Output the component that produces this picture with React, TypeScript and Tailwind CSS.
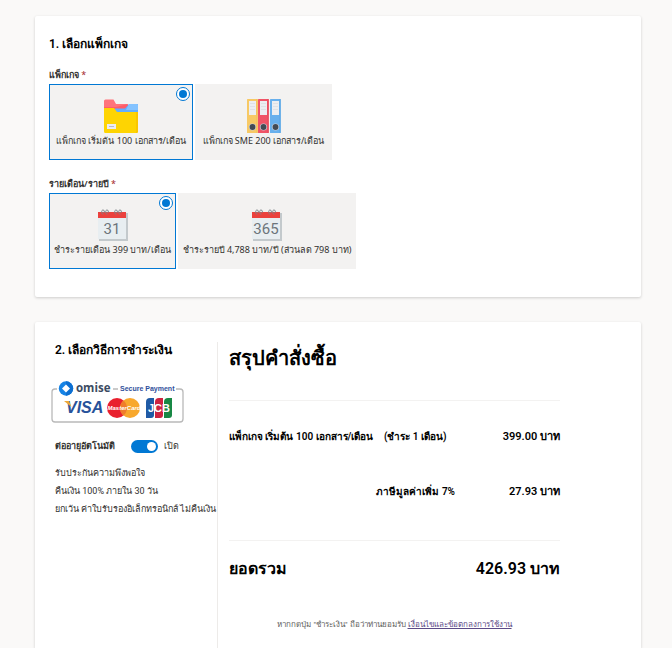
import { useState } from "react";
import type { ReactNode } from "react";

type Choice = {
  id: string;
  label: string;
  width: string;
  icon: ReactNode;
};

function FolderIcon() {
  return (
    <svg viewBox="0 0 34 34" className="h-[34px] w-[34px]" aria-hidden="true">
      <path d="M0 2a1.500 1.500 0 0 1 1.500-1.500h8L12 5h11v7H0z" fill="#ff737b" />
      <path d="M0 8h12l12-3v5H0z" fill="#ff5d68" />
      <path d="M25 5h9v8H11V9.500h10z" fill="#62aeff" />
      <path d="M25 5h8a1 1 0 0 1 1 1v5H22z" fill="#84c3ff" />
      <path d="M0 9h10l3 4h20.500v20a1 1 0 0 1-1 1h-31a1.500 1.500 0 0 1-1.500-1.500z" fill="#fed402" />
      <path d="M32 13h2v19.500a1.500 1.500 0 0 1-1.500 1.500H32z" fill="#fac600" />
      <path d="M3 25h9v5H3z" fill="#ececf1" />
      <path d="M5 27.500h5" stroke="#b9b9c6" />
    </svg>
  );
}

function BindersIcon() {
  const binders = [
    { x: 0, fill: "#f7c965", edge: "#f2bd55" },
    { x: 11, fill: "#f05467", edge: "#e6485b" },
    { x: 23, fill: "#68b0ed", edge: "#5ba5e4" },
  ];
  return (
    <svg viewBox="0 0 34 34" className="h-[34px] w-[34px]" aria-hidden="true">
      {binders.map(b => (
        <g key={b.x}>
          <rect x={b.x} width="10.800" height="34" rx=".6" fill={b.fill} />
          <path d={`M${b.x + 10} 0v34`} stroke={b.edge} />
          <rect x={b.x + 2} y="2" width="7" height="14" fill="#eceef1" />
          <path d={`M${b.x + 3} 4.500h5M${b.x + 3} 7.500h5M${b.x + 3} 10.500h5`} stroke="#dfe1e5" />
          <circle cx={b.x + 5.5} cy="28" r="3.600" fill="#c7ced8" />
          <circle cx={b.x + 5.5} cy="28" r="2.900" fill="#434a54" />
        </g>
      ))}
    </svg>
  );
}

function CalendarIcon({ text }: { text: string }) {
  return (
    <svg viewBox="0 0 32 34" className="h-[34px] w-8" aria-hidden="true">
      <path d="M2 5h29v28H2z" fill="#c3c9cc" />
      <path d="M1 4h28v27H1z" fill="#e8eef1" />
      <path d="M1 4h28v6H1z" fill="#eb413d" />
      {[6, 10, 19, 23].map(x => (
        <path key={x} d={`M${x} 6.500c-2-2-1.500-4.500 0-4.500s2 2 .5 3`} fill="none" stroke="#7d858a" />
      ))}
      <text x="15" y="26" textAnchor="middle" fontSize="15" fill="#6c757b" className="font-['Roboto',sans-serif]">
        {text}
      </text>
    </svg>
  );
}

function PaymentBadge() {
  return (
    <svg viewBox="0 0 134 44" className="h-11 w-[134px]" role="img" aria-label="omise Secure Payment: VISA, MasterCard, JCB">
      <path d="M6 9H4a3 3 0 0 0-3 3v27a3 3 0 0 0 3 3h125a3 3 0 0 0 3-3V12a3 3 0 0 0-3-3h-4M62 9h5" fill="none" stroke="#b9b9b9" strokeWidth="1.300" />
      <circle cx="15" cy="8.500" r="7.200" fill="#1683e5" />
      <path d="M15 1.300a7.200 7.200 0 0 1 0 14.400z" fill="#0d6fd1" />
      <path d="m15 4.500 4 4-4 4-4-4z" fill="#fff" />
      <text x="25" y="12" fontSize="11.500" fill="#3c4b62" className="font-['Open_Sans',sans-serif] font-bold">omise</text>
      <text x="69" y="11" fontSize="7" fill="#304f9b" className="font-['Liberation_Sans',sans-serif] font-bold">Secure Payment</text>
      <text x="15" y="33" fontSize="16" fill="#27529a" className="font-['Liberation_Sans',sans-serif] font-bold italic">VISA</text>
      <path d="M13 21h5l2.500 6z" fill="#eda838" />
      <circle cx="66" cy="28" r="10" fill="#e9202e" />
      <circle cx="79" cy="28" r="10" fill="#f8a82d" />
      <path d="M72.500 20.500a10 10 0 0 1 0 15 10 10 0 0 1 0-15" fill="#ef7d2b" />
      <text x="73" y="30" textAnchor="middle" fontSize="6" fill="#fff" className="font-['Liberation_Sans',sans-serif] font-bold italic">MasterCard</text>
      <path d="M99 18h4v17a3 3 0 0 1-3 3h-5V22a4 4 0 0 1 4-4" fill="#1f5aa5" />
      <path d="M108 18h4v17a3 3 0 0 1-3 3h-5V22a4 4 0 0 1 4-4" fill="#ce2340" />
      <path d="M117 18h4v17a3 3 0 0 1-3 3h-5V22a4 4 0 0 1 4-4" fill="#188845" />
      <text x="108" y="32" textAnchor="middle" fontSize="11" fill="#fff" className="font-['Liberation_Sans',sans-serif] font-bold">JCB</text>
    </svg>
  );
}

const packages: Choice[] = [
  { id: "starter", label: "แพ็กเกจ เริ่มต้น 100 เอกสาร/เดือน", width: "w-36", icon: <FolderIcon /> },
  { id: "sme", label: "แพ็กเกจ SME 200 เอกสาร/เดือน", width: "w-[137px]", icon: <BindersIcon /> },
];

const periods: Choice[] = [
  { id: "monthly", label: "ชำระรายเดือน 399 บาท/เดือน", width: "w-[127px]", icon: <CalendarIcon text="31" /> },
  { id: "yearly", label: "ชำระรายปี 4,788 บาท/ปี (ส่วนลด 798 บาท)", width: "w-[178px]", icon: <CalendarIcon text="365" /> },
];

interface ChoiceGroupProps {
  legend: string;
  name: string;
  choices: Choice[];
  value: string;
  onChange: (id: string) => void;
}

function ChoiceGroup({ legend, name, choices, value, onChange }: ChoiceGroupProps) {
  return (
    <fieldset>
      <legend className="text-[9px] leading-[18px] font-semibold text-[#323130]">
        {legend} <span className="font-normal text-[#a4262c]">*</span>
      </legend>
      <div className="flex gap-0.5">
        {choices.map(c => (
          <label
            key={c.id}
            className={`relative flex h-[76px] cursor-pointer flex-col items-center border bg-[#f3f2f1] pt-3.5 ${c.width} ${
              value === c.id ? "border-[#0078d4]" : "border-transparent"
            }`}
          >
            <input
              type="radio"
              name={name}
              checked={value === c.id}
              onChange={() => onChange(c.id)}
              className="absolute top-0.5 right-0.5 flex h-3.5 w-3.5 appearance-none items-center justify-center rounded-full checked:border checked:border-[#0078d4] checked:bg-white checked:before:h-2 checked:before:w-2 checked:before:rounded-full checked:before:bg-[#0078d4]"
            />
            {c.icon}
            <span className="text-[9px] leading-4 whitespace-nowrap text-[#323130]">{c.label}</span>
          </label>
        ))}
      </div>
    </fieldset>
  );
}

export default function App() {
  const [pkg, setPkg] = useState("starter");
  const [period, setPeriod] = useState("monthly");
  const [renew, setRenew] = useState(true);

  return (
    <main className="flex min-h-screen flex-col gap-[25px] bg-[#faf9f8] pt-4 pr-[31px] pl-[35px] font-['Noto_Sans',sans-serif] text-[#323130]">
      {/* Package */}
      <section className="rounded-xs bg-white px-3.5 pt-[18px] pb-7 shadow-[0_1px_3px_rgba(0,0,0,0.18)]">
        <h2 className="font-['Roboto',sans-serif] text-xs leading-5 font-semibold text-black">1. เลือกแพ็กเกจ</h2>
        <div className="mt-3 flex flex-col gap-[15px]">
          <ChoiceGroup legend="แพ็กเกจ" name="package" choices={packages} value={pkg} onChange={setPkg} />
          <ChoiceGroup legend="รายเดือน/รายปี" name="period" choices={periods} value={period} onChange={setPeriod} />
        </div>
      </section>

      {/* Payment */}
      <section className="flex flex-1 rounded-t-xs bg-white pt-5 shadow-[0_1px_3px_rgba(0,0,0,0.18)]">
        <div className="w-[182px] shrink-0 pl-4">
          <h2 className="pl-1 font-['Roboto',sans-serif] text-xs leading-4 font-semibold text-black">2. เลือกวิธีการชำระเงิน</h2>
          <div className="mt-[22px]">
            <PaymentBadge />
          </div>
          <div className="mt-3 flex items-center pl-1 text-[9px] leading-5">
            <label htmlFor="renew" className="font-semibold">ต่ออายุอัตโนมัติ</label>
            <input
              id="renew"
              type="checkbox"
              role="switch"
              checked={renew}
              onChange={e => setRenew(e.target.checked)}
              className="ml-4 flex h-[13px] w-[27px] appearance-none items-center rounded-full bg-[#8a8886] px-0.5 before:h-[9px] before:w-[9px] before:rounded-full before:bg-white checked:justify-end checked:bg-[#0078d4]"
            />
            <span className="ml-1.5">{renew ? "เปิด" : "ปิด"}</span>
          </div>
          <p className="mt-2 pl-1 font-['Roboto',sans-serif] text-[9px] leading-[18px] whitespace-nowrap">
            รับประกันความพึงพอใจ
            <br />
            คืนเงิน 100% ภายใน 30 วัน
            <br />
            ยกเว้น ค่าใบรับรองอิเล็กทรอนิกส์ ไม่คืนเงิน
          </p>
        </div>

        <div className="flex-1 border-l border-[#edebe9] pr-[81px] pl-[11px] font-['Roboto',sans-serif] font-semibold text-black">
          <h2 className="text-xl leading-8">สรุปคำสั่งซื้อ</h2>
          <table className="mt-[26px] w-full border-y border-[#f3f2f1] text-[11px] leading-4">
            <tbody>
              <tr>
                <td className="pt-7 text-left text-[10px] leading-4">
                  แพ็กเกจ เริ่มต้น 100 เอกสาร/เดือน <span className="pl-2">(ชำระ 1 เดือน)</span>
                </td>
                <td className="pt-7 text-right">399.00 บาท</td>
              </tr>
              <tr>
                <td className="pt-[39px] pr-9 pb-10 text-right text-[10px] leading-4">ภาษีมูลค่าเพิ่ม 7%</td>
                <td className="pt-[39px] pb-10 text-right">27.93 บาท</td>
              </tr>
            </tbody>
          </table>
          <div className="mt-4 flex justify-between text-base leading-6">
            <span>ยอดรวม</span>
            <span>426.93 บาท</span>
          </div>
          <p className="mt-9 text-center text-[8px] leading-4 font-normal text-[#605e5c]">
            หากกดปุ่ม "ชำระเงิน" ถือว่าท่านยอมรับ{" "}
            <a href="#terms" className="text-[#5c4a86] underline">เงื่อนไขและข้อตกลงการใช้งาน</a>
          </p>
        </div>
      </section>
    </main>
  );
}
